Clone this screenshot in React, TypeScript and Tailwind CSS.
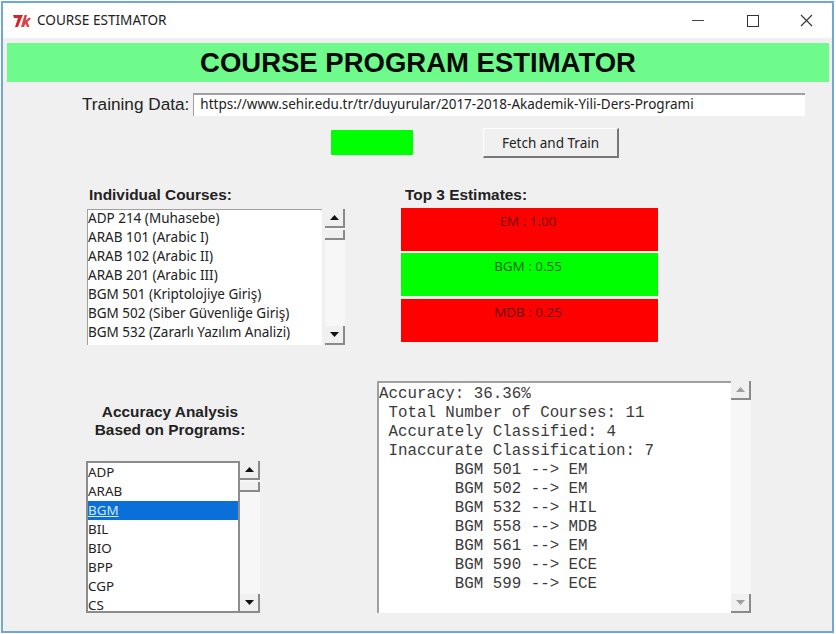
import type { ReactNode } from 'react';

const courses = [
  'ADP 214 (Muhasebe)',
  'ARAB 101 (Arabic I)',
  'ARAB 102 (Arabic II)',
  'ARAB 201 (Arabic III)',
  'BGM 501 (Kriptolojiye Giriş)',
  'BGM 502 (Siber Güvenliğe Giriş)',
  'BGM 532 (Zararlı Yazılım Analizi)',
];

const programs = ['ADP', 'ARAB', 'BGM', 'BIL', 'BIO', 'BPP', 'CGP', 'CS'];

const report = [
  'Accuracy: 36.36%',
  ' Total Number of Courses: 11',
  ' Accurately Classified: 4',
  ' Inaccurate Classification: 7',
  '        BGM 501 --> EM',
  '        BGM 502 --> EM',
  '        BGM 532 --> HIL',
  '        BGM 558 --> MDB',
  '        BGM 561 --> EM',
  '        BGM 590 --> ECE',
  '        BGM 599 --> ECE',
];

function ScrollButton({ dir, dim }: { dir: 'up' | 'down'; dim?: boolean }) {
  return (
    <div className="flex h-[19px] w-full items-center justify-center border-r-2 border-b-2 border-[#8a8a8a] bg-[#f0f0f0]">
      <svg width="9" height="5" viewBox="0 0 9 5">
        <path
          d={dir === 'up' ? 'M4.5 0L9 5H0Z' : 'M0 0H9L4.5 5Z'}
          fill={dim ? '#a0a0a0' : '#111'}
        />
      </svg>
    </div>
  );
}

function ScrollBar({ thumb }: { thumb?: boolean }) {
  return (
    <div className="flex w-[20px] flex-col bg-[#f7f7f7]">
      <ScrollButton dir="up" dim={!thumb} />
      {thumb && <div className="mt-[2px] h-[10px] border-r-2 border-b-2 border-[#8a8a8a] bg-[#f0f0f0]" />}
      <div className="flex-1" />
      <ScrollButton dir="down" dim={!thumb} />
    </div>
  );
}

function Heading({ children }: { children: ReactNode }) {
  return <div className="font-['Liberation_Sans',sans-serif] text-[15.4px] leading-[18px] font-bold text-[#222]">{children}</div>;
}

function Estimate({ label, color }: { label: string; color: string }) {
  return (
    <div className={`h-[43px] pt-[4px] pr-[3px] text-center text-[13.4px] leading-[19px] text-black/60 ${color}`}>
      {label}
    </div>
  );
}

export default function App() {
  return (
    <div className="h-[634px] w-[836px] bg-white pt-[1px] pr-[2px] pb-[1px] pl-[1px] font-['Noto_Sans',sans-serif]">
      <div className="flex h-full flex-col border-2 border-[#6fa8d6]">
        {/* title bar */}
        <div className="flex h-[35px] shrink-0 items-center bg-white pl-[10px]">
          <svg width="18" height="14" viewBox="0 0 18 14">
            <path d="M0 1H10L8.5 4L5 13H2L5 4H1Z" fill="#d8232a" />
            <path d="M8 13L11.5 1H14L12.8 6.5L16 3.5L18 4.5L14.5 8L16.5 13H14L12.5 9.5L11 13Z" fill="#d8434a" />
          </svg>
          <span className="ml-[6px] text-[13.6px] text-[#222]">COURSE ESTIMATOR</span>
          <div className="ml-auto flex items-center">
            <div className="flex w-[54px] justify-center">
              <div className="h-[1px] w-[12px] bg-[#444]" />
            </div>
            <div className="flex w-[55px] justify-center">
              <div className="h-[12px] w-[12px] border border-[#333]" />
            </div>
            <div className="flex w-[52px] justify-center">
              <svg width="13" height="13" viewBox="0 0 13 13">
                <path d="M1 1L12 12M12 1L1 12" stroke="#333" strokeWidth="1.1" />
              </svg>
            </div>
          </div>
        </div>

        {/* body */}
        <div className="flex flex-1 flex-col bg-[#f0f0f0] pt-[5px] pr-[3px] pl-[4px]">
          <div className="flex h-[39px] items-center justify-center bg-[#6ffb8b] pt-[1px] font-['Liberation_Sans',sans-serif] text-[27.5px] font-bold text-[#0a0a0a]">
            COURSE PROGRAM ESTIMATOR
          </div>

          <div className="mt-[11px] flex h-[23px] items-center pl-[75px]">
            <span className="pt-[1px] font-['Liberation_Sans',sans-serif] text-[17.2px] text-[#222]">Training Data:</span>
            <div className="ml-[4px] h-[23px] w-[612px] border-t-2 border-l border-[#a0a0a0] bg-white pl-[6px] text-[13.5px] leading-[19px] text-[#222]">
              https://www.sehir.edu.tr/tr/duyurular/2017-2018-Akademik-Yili-Ders-Programi
            </div>
          </div>

          <div className="mt-[12px] flex h-[30px] items-start pl-[324px]">
            <div className="mt-[2px] h-[25px] w-[82px] rounded-[1px] bg-[#00ff00]" />
            <div className="ml-[70px] flex h-[30px] w-[136px] items-center justify-center border-t border-r-2 border-b-2 border-l border-t-white border-r-[#777] border-b-[#777] border-l-white bg-[#f0f0f0] pt-[1px] text-[13.5px] text-[#222]">
              Fetch and Train
            </div>
          </div>

          {/* courses + estimates */}
          <div className="mt-[28px] flex pl-[80px]">
            <div className="w-[258px]">
              <div className="pl-[2px]"><Heading>Individual Courses:</Heading></div>
              <div className="mt-[5px] flex h-[136px] gap-[3px]">
                <div className="w-[235px] overflow-hidden border-t border-l border-[#a0a0a0] bg-white text-[13.5px] leading-[17px] text-[#222]">
                  {courses.map((c) => (
                    <div key={c} className="h-[19px] whitespace-nowrap">{c}</div>
                  ))}
                </div>
                <ScrollBar thumb />
              </div>
            </div>
            <div className="ml-[56px] w-[257px]">
              <div className="pl-[4px]"><Heading>Top 3 Estimates:</Heading></div>
              <div className="mt-[4px] flex flex-col gap-[2px]">
                <Estimate label="EM : 1.00" color="bg-[#ff0000]" />
                <Estimate label="BGM : 0.55" color="bg-[#00ff00]" />
                <Estimate label="MDB : 0.25" color="mt-[1px] bg-[#ff0000]" />
              </div>
            </div>
          </div>

          {/* programs + report */}
          <div className="mt-[36px] flex pl-[79px]">
            <div className="w-[175px] pt-[22px]">
              <div className="w-[168px] text-center"><Heading>Accuracy Analysis<br />Based on Programs:</Heading></div>
              <div className="mt-[22px] flex h-[152px]">
                <div className="w-[154px] overflow-hidden border-2 border-[#8c8c8c] bg-white text-[13.4px] leading-[19px] text-[#222]">
                  {programs.map((p) =>
                    p === 'BGM' ? (
                      <div key={p} className="h-[19px] bg-[#0a6fd8] text-[#cfe6ff] underline">{p}</div>
                    ) : (
                      <div key={p} className="h-[19px]">{p}</div>
                    ),
                  )}
                </div>
                <ScrollBar thumb />
              </div>
            </div>
            <div className="ml-[116px] flex h-[232px]">
              <div className="w-[354px] overflow-hidden border-t-2 border-l-2 border-[#a0a0a0] bg-white pt-[2px] font-['Liberation_Mono',monospace] text-[15.8px] leading-[19px] whitespace-pre text-[#3a3a3a]">
                {report.map((line) => (
                  <div key={line} className="h-[19px]">{line}</div>
                ))}
              </div>
              <ScrollBar />
            </div>
          </div>
        </div>
      </div>
    </div>
  );
}
